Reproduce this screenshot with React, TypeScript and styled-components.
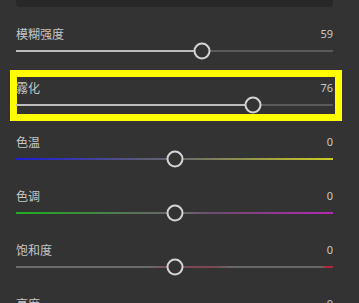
import React from "react";
import styled, { createGlobalStyle } from "styled-components";

const Global = createGlobalStyle`
  html, body { margin: 0; padding: 0; background: #333333; }
  body { font-family: "Noto Sans CJK SC", "Noto Sans", sans-serif; overflow: hidden; }
`;

const Panel = styled.div`
  width: 359px;
  height: 303px;
  overflow: hidden;
  background: #333333;
  padding: 0 26px 0 16px;
  box-sizing: border-box;
`;

const TopBox = styled.div`
  height: 7px;
  background: #282828;
  border-radius: 0 0 4px 4px;
  margin-bottom: 19px;
`;

const List = styled.div`
  display: flex;
  flex-direction: column;
  gap: 20px;
`;

const Row = styled.div<{ $highlight?: boolean }>`
  position: relative;
  display: flex;
  flex-direction: column;
  &::before {
    content: "";
    display: ${(p) => (p.$highlight ? "block" : "none")};
    position: absolute;
    left: -6px;
    right: -9px;
    top: -10px;
    bottom: -7px;
    border: 7px solid #ffff00;
    pointer-events: none;
  }
`;

const Header = styled.div`
  display: flex;
  justify-content: space-between;
  align-items: center;
  height: 16px;
  font-size: 12px;
  line-height: 16px;
  color: #c6c6c6;
`;

const Value = styled.span`
  font-family: "Noto Sans", sans-serif;
  font-size: 11px;
  color: #c8c8c8;
`;

const SliderArea = styled.div`
  position: relative;
  height: 18px;
  display: flex;
  align-items: center;
`;

const Track = styled.div<{ $bg: string }>`
  width: 100%;
  height: 2px;
  background: ${(p) => p.$bg};
`;

const Thumb = styled.div`
  position: absolute;
  top: 50%;
  width: 17px;
  height: 17px;
  box-sizing: border-box;
  border: 2px solid #d4d4d4;
  border-radius: 50%;
  background: #333333;
  transform: translate(-50%, -50%);
`;

type Item = {
  label: string;
  value: number;
  min: number;
  max: number;
  track: (pct: number) => string;
  highlight?: boolean;
};

const plain = (pct: number) =>
  `linear-gradient(to right, #bdbdbd 0%, #bdbdbd ${pct}%, #5a5a5a ${pct}%, #5a5a5a 100%)`;

const items: Item[] = [
  { label: "模糊强度", value: 59, min: 0, max: 100, track: plain },
  { label: "霧化", value: 76, min: 0, max: 100, track: plain, highlight: true },
  {
    label: "色温",
    value: 0,
    min: -100,
    max: 100,
    track: () =>
      "linear-gradient(to right, #1e1ed2 0%, #2a2ac0 10%, #5a5a78 40%, #6a6a6a 52%, #8e8e50 70%, #cccc22 100%)",
  },
  {
    label: "色调",
    value: 0,
    min: -100,
    max: 100,
    track: () =>
      "linear-gradient(to right, #22b022 0%, #2e9a2e 12%, #5e6e5e 40%, #6a6a6a 52%, #6e4a6e 62%, #b22ab2 100%)",
  },
  {
    label: "饱和度",
    value: 0,
    min: -100,
    max: 100,
    track: () =>
      "linear-gradient(to right, #6a6a6a 0%, #6a6a6a 42%, #7a5056 48%, #6a6a6a 50%, #7a4850 54%, #7a4850 62%, #686868 68%, #686868 96%, #b02a3a 98%, #b02a3a 100%)",
  },
  { label: "亮度", value: 0, min: -100, max: 100, track: plain },
];

const THUMB = 16;

function Slider({ item }: { item: Item }) {
  const frac = (item.value - item.min) / (item.max - item.min);
  const pct = frac * 100;
  const left = `calc(${THUMB / 2}px + ${frac} * (100% - ${THUMB}px))`;
  return (
    <SliderArea>
      <Track $bg={item.track(pct)} />
      <Thumb style={{ left }} />
    </SliderArea>
  );
}

export default function App() {
  return (
    <>
      <Global />
      <Panel>
        <TopBox />
        <List>
          {items.map((it) => (
            <Row key={it.label} $highlight={it.highlight}>
              <Header>
                <span>{it.label}</span>
                <Value>{it.value}</Value>
              </Header>
              <Slider item={it} />
            </Row>
          ))}
        </List>
      </Panel>
    </>
  );
}
